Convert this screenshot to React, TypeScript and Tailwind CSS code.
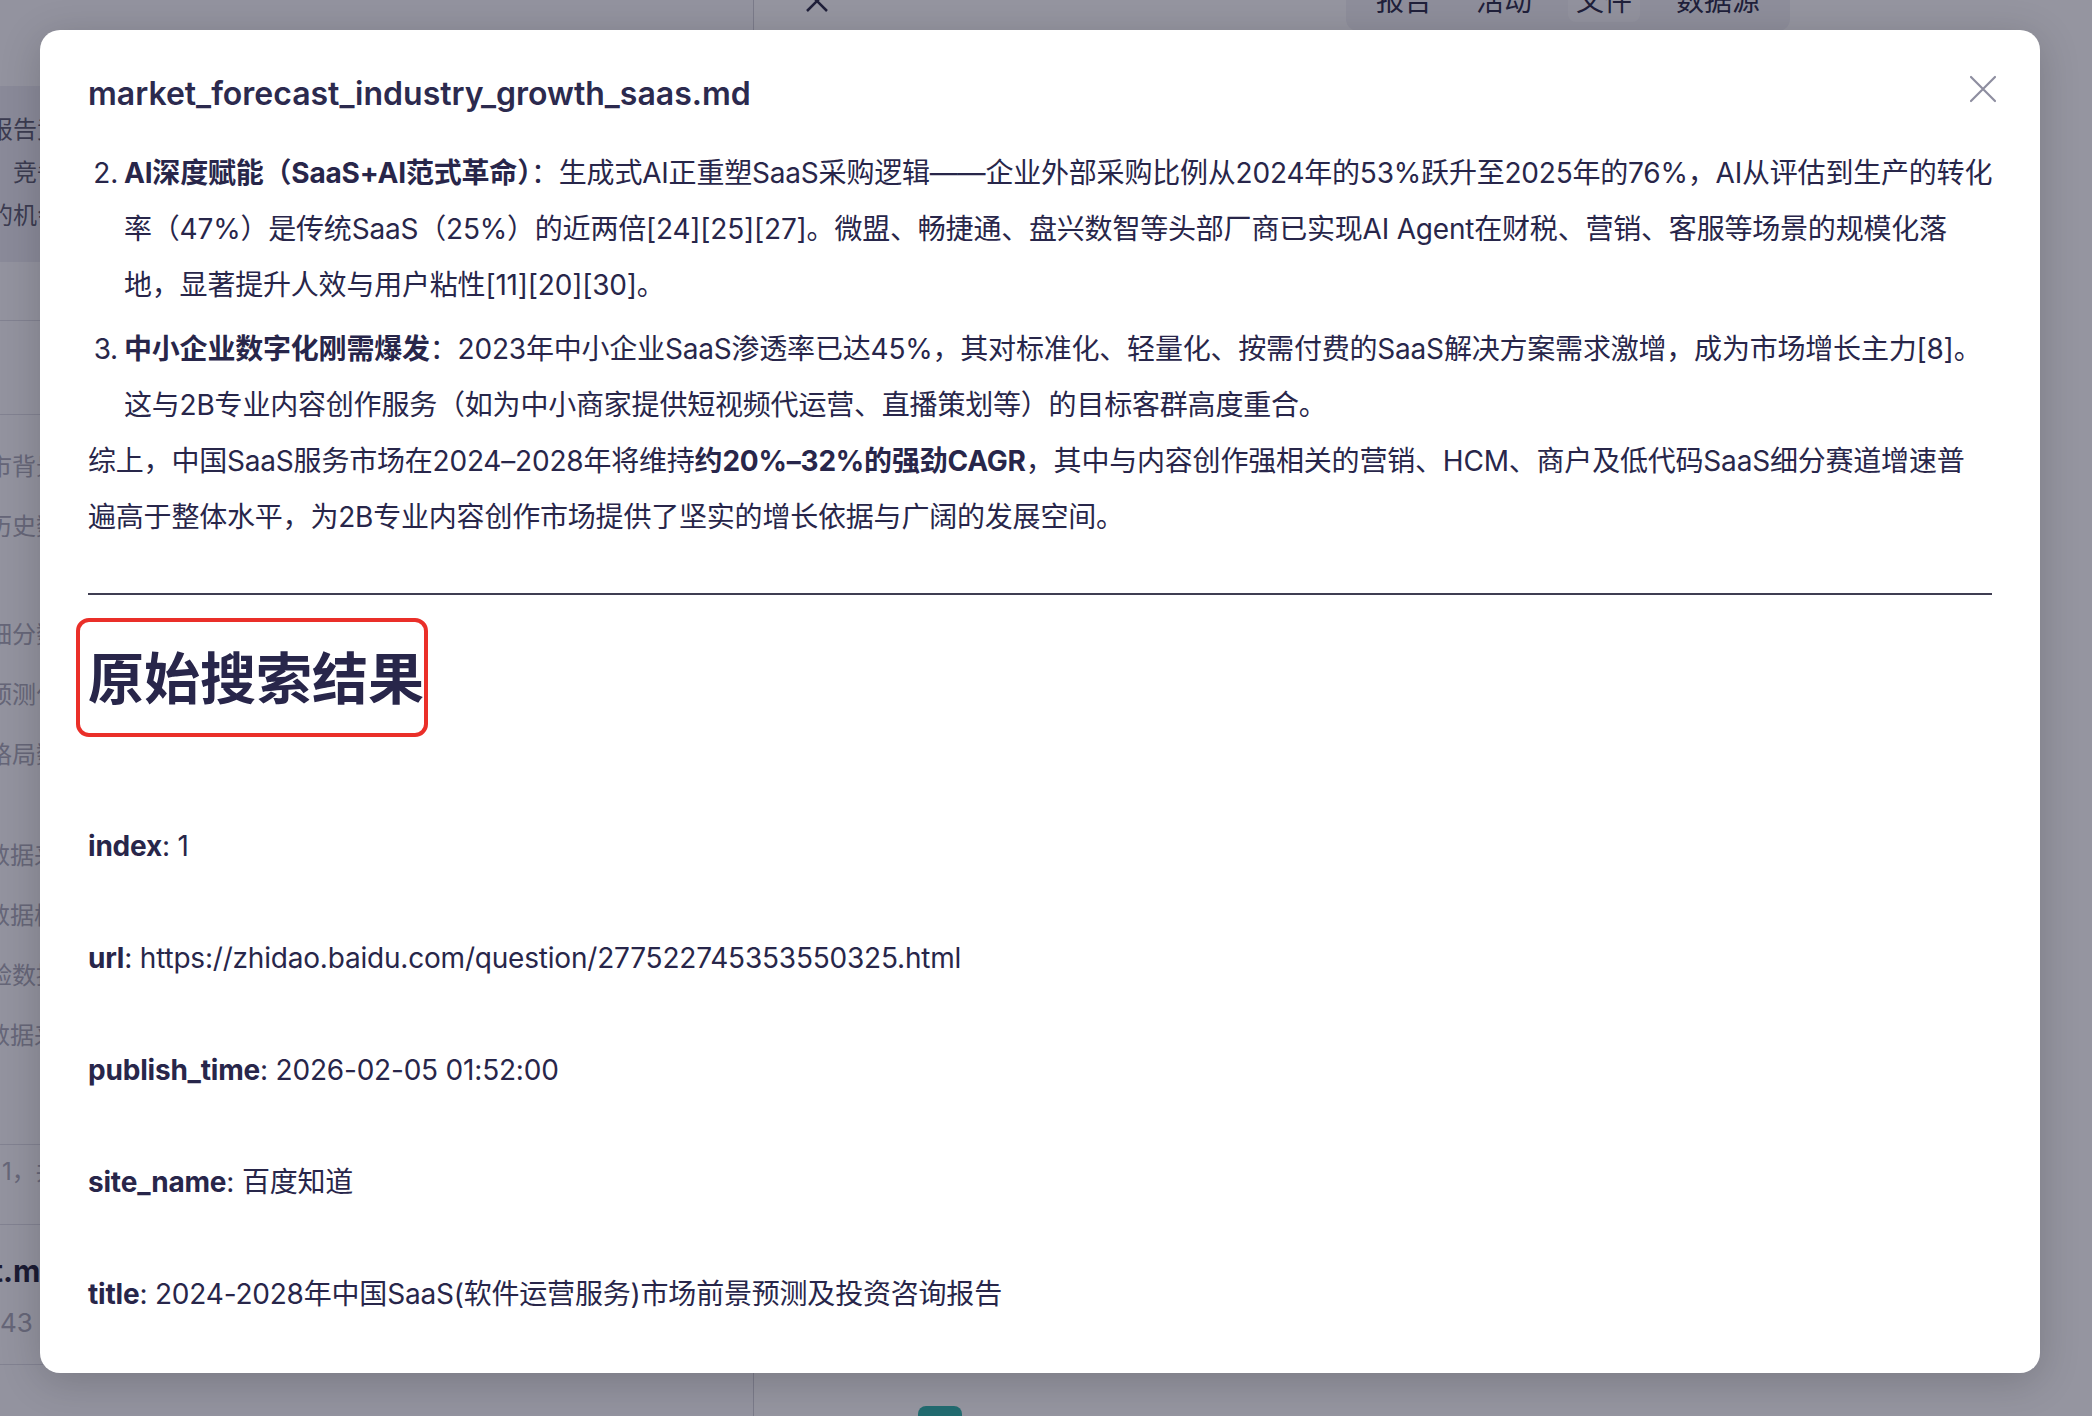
import React from "react";

const Row = ({ k, v }: { k: string; v: string }) => (
  <div className="leading-[56px] text-[28px] whitespace-nowrap">
    <span className="font-bold">{k}</span>: {v}
  </div>
);

export default function App() {
  return (
    <div className="relative w-[2092px] h-[1416px] overflow-hidden bg-white font-[Inter,'Noto_Sans_CJK_SC',sans-serif] text-[#28264a]">
      {/* background app */}
      <div className="flex h-full w-full">
        <aside className="w-[754px] h-full border-r border-[#cfcfd8] bg-[#fbfbfd] flex flex-col text-[24px] text-[#a9a9b6] overflow-hidden">
          <div className="mt-[86px] h-[176px] pt-[22px] bg-[#ececf3] text-[#5d5d70] leading-[43px] whitespace-nowrap">
            <div className="-ml-[11px]">报告竞品分析与市场洞察</div>
            <div className="ml-[13px]">竞争格局与主要玩家</div>
            <div className="-ml-[11px]">的机会与风险评估</div>
          </div>
          <div className="h-[59px] border-b border-[#dcdce4]" />
          <div className="h-[94px] border-b border-[#dcdce4]" />
          <div className="mt-[22px] leading-[60px] whitespace-nowrap">
            <div className="-ml-[12px]">市背景与行业概览</div>
            <div className="-ml-[12px]">历史数据回顾</div>
          </div>
          <div className="mt-[48px] leading-[60px] whitespace-nowrap">
            <div className="-ml-[12px]">细分数据拆解</div>
            <div className="-ml-[12px]">预测化模型</div>
            <div className="-ml-[12px]">格局数据整理</div>
          </div>
          <div className="mt-[41px] leading-[60px] whitespace-nowrap">
            <div className="-ml-[14px]">数据来源汇总</div>
            <div className="-ml-[14px]">数据校验</div>
            <div className="-ml-[12px]">验数据一致性</div>
            <div className="-ml-[14px]">数据来源说明</div>
          </div>
          <div className="h-[79px] border-b border-[#dcdce4]" />
          <div className="h-[80px] border-b border-[#dcdce4] pt-[7px] leading-[40px] whitespace-nowrap pl-[2px]">1，共 12 个文件</div>
          <div className="h-[140px] border-b border-[#dcdce4] pt-[22px] whitespace-nowrap">
            <div className="-ml-[8px] leading-[48px] text-[30px] font-bold text-[#23233a]">t.md</div>
            <div className="mt-[8px] leading-[40px] text-[26px]">43 KB</div>
          </div>
        </aside>
        <main className="flex-1 flex flex-col">
          <div className="-mt-[22px] h-[46px] flex items-center pl-[48px] pr-[40px] text-[28px] text-[#2a2a45]">
            <svg width="30" height="30" viewBox="0 0 30 30" className="text-[#2a2a45]">
              <path d="M5 5 L25 25 M25 5 L5 25" stroke="currentColor" strokeWidth="2.5" />
            </svg>
            <div className="ml-auto flex items-center rounded-[12px] bg-[#f2f2f6] h-[60px] px-[30px] gap-[44px] mr-[262px]">
              <span>报告</span>
              <span>活动</span>
              <span className="bg-[#fafafc] rounded-[8px] px-[8px] -mx-[8px]">文件</span>
              <span>数据源</span>
            </div>
          </div>
          <div className="flex-1" />
          <div className="h-[10px] overflow-hidden pl-[164px]">
            <div className="w-[44px] h-[30px] rounded-[8px] bg-[#2fb3a8]" />
          </div>
        </main>
      </div>

      {/* overlay */}
      <div className="absolute inset-0 bg-[rgba(20,20,45,0.45)]" />

      {/* modal */}
      <div className="absolute left-[40px] top-[30px] w-[2000px] h-[1343px] rounded-[20px] bg-white shadow-[0_8px_40px_rgba(0,0,0,0.18)] overflow-hidden">
        <button className="absolute right-[43px] top-[45px] w-[28px] h-[28px] text-[#8e8ea0]">
          <svg width="28" height="28" viewBox="0 0 28 28">
            <path d="M2 2 L26 26 M26 2 L2 26" stroke="currentColor" strokeWidth="2.2" strokeLinecap="round" />
          </svg>
        </button>
        <div className="pl-[48px] pr-[48px] pt-[44px]">
          <div className="h-[40px] leading-[40px] text-[32px] font-semibold text-[#2c2a4e]">market_forecast_industry_growth_saas.md</div>
        </div>
        <div className="px-[48px] mt-[31px] text-[28px] leading-[56px] tracking-[-0.2px]">
          <div className="flex">
            <span className="w-[36px] shrink-0 text-right pr-[6px]">2.</span>
            <div className="whitespace-nowrap">
              <b className="font-bold">AI深度赋能（SaaS+AI范式革命）</b>：生成式AI正重塑SaaS采购逻辑——企业外部采购比例从2024年的53%跃升至2025年的76%，AI从评估到生产的转化
              <br />
              率（47%）是传统SaaS（25%）的近两倍[24][25][27]。微盟、畅捷通、盘兴数智等头部厂商已实现AI Agent在财税、营销、客服等场景的规模化落
              <br />
              地，显著提升人效与用户粘性[11][20][30]。
            </div>
          </div>
          <div className="flex mt-[8px]">
            <span className="w-[36px] shrink-0 text-right pr-[6px]">3.</span>
            <div className="whitespace-nowrap">
              <b className="font-bold">中小企业数字化刚需爆发</b>：2023年中小企业SaaS渗透率已达45%，其对标准化、轻量化、按需付费的SaaS解决方案需求激增，成为市场增长主力[8]。
              <br />
              这与2B专业内容创作服务（如为中小商家提供短视频代运营、直播策划等）的目标客群高度重合。
            </div>
          </div>
          <p className="whitespace-nowrap">
            综上，中国SaaS服务市场在2024–2028年将维持<b className="font-bold">约20%–32%的强劲CAGR</b>，其中与内容创作强相关的营销、HCM、商户及低代码SaaS细分赛道增速普
            <br />
            遍高于整体水平，为2B专业内容创作市场提供了坚实的增长依据与广阔的发展空间。
          </p>
          <div className="mt-[48px] h-[2px] bg-[#3f3e52]" />
          <div className="relative mt-[42px] w-fit">
            <h1 className="text-[56px] leading-[84px] font-bold whitespace-nowrap tracking-normal">原始搜索结果</h1>
            <div className="absolute -left-[12px] -top-[19px] w-[352px] h-[119px] rounded-[13px] border-[4px] border-[#ea2f29]" />
          </div>
          <div className="mt-[97px] flex flex-col gap-[56px]">
            <Row k="index" v="1" />
            <Row k="url" v="https://zhidao.baidu.com/question/277522745353550325.html" />
            <Row k="publish_time" v="2026-02-05 01:52:00" />
            <Row k="site_name" v="百度知道" />
            <Row k="title" v="2024-2028年中国SaaS(软件运营服务)市场前景预测及投资咨询报告" />
          </div>
        </div>
      </div>
    </div>
  );
}
